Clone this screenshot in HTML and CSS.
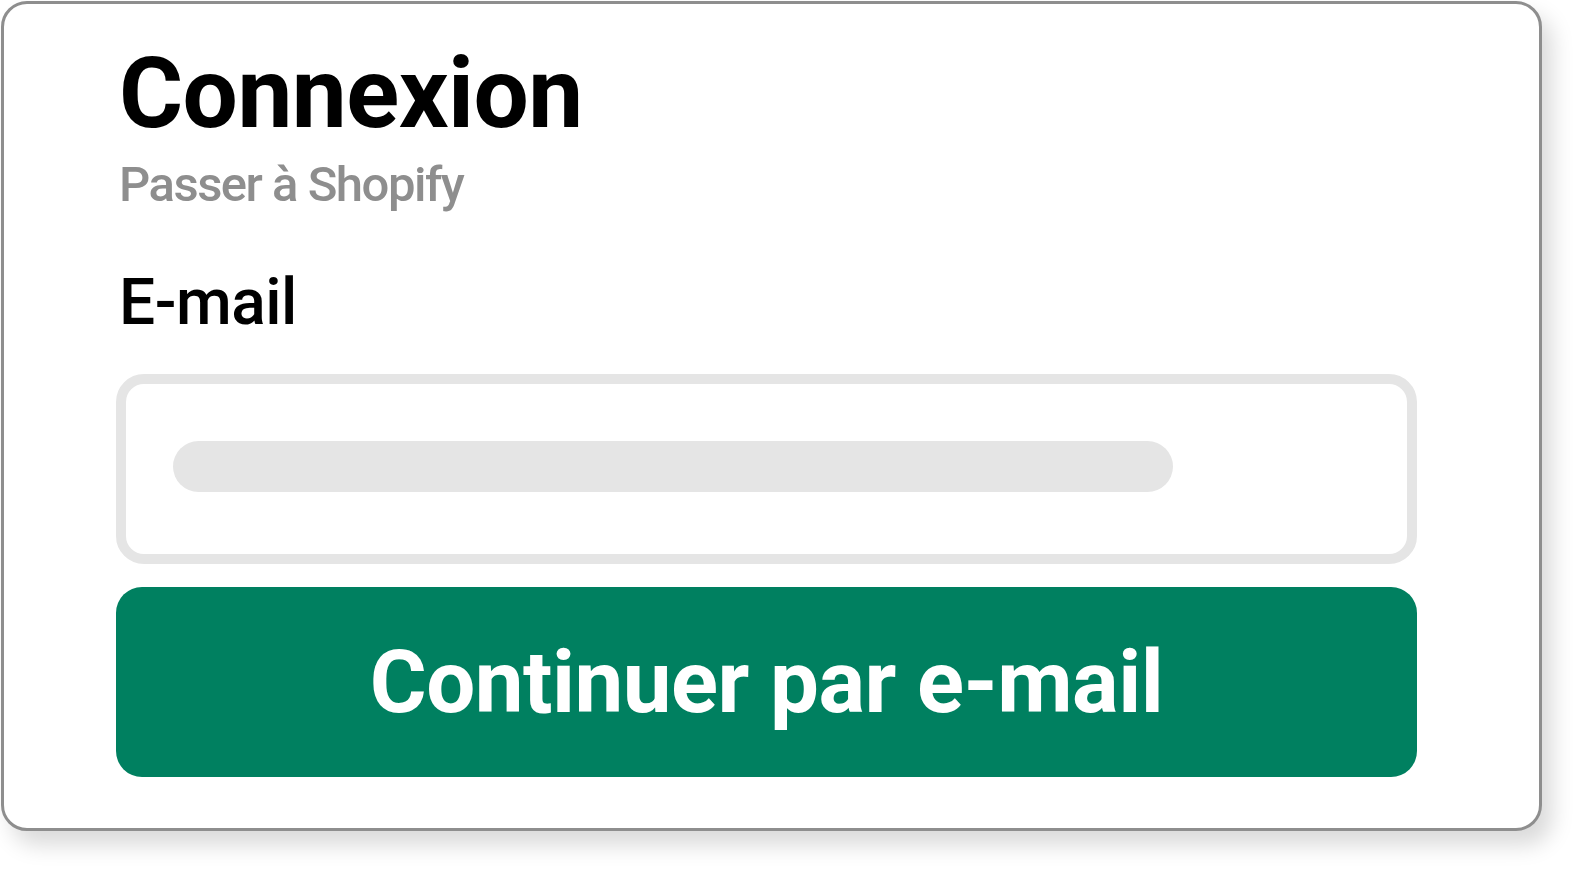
FILE: index.html
```html
<!DOCTYPE html>
<html lang="fr">
<head>
    <meta charset="UTF-8">
    <title>Connexion</title>
    <link rel="stylesheet" href="styles.css">
</head>
<body>
    <div class="card">
        <h1>Connexion</h1>
        <div class="subtitle">Passer à Shopify</div>
        <label class="field-label" for="email">E-mail</label>
        <div class="field" id="email">
            <div class="field-placeholder"></div>
        </div>
        <button class="submit">Continuer par e-mail</button>
    </div>
</body>
</html>
```

FILE: styles.css
```css
html, body {
    margin: 0;
    background: #fff;
}
body {
    min-height: 100vh;
    padding-bottom: 38px;
    box-sizing: border-box;
    font-family: 'Roboto', 'Liberation Sans', Arial, sans-serif;
    color: #000;
}
.card {
    box-sizing: border-box;
    width: 1541px;
    height: 830px;
    margin: 1px 0 0 1px;
    border: 3px solid #8e8e8e;
    border-radius: 26px;
    background: #fff;
    box-shadow: 10px 14px 22px rgba(0,0,0,0.15);
    padding: 30px 122px 0 112px;
    display: flex;
    flex-direction: column;
}
h1 {
    margin: 0 0 0 3px;
    font-size: 98px;
    font-weight: 700;
    line-height: 120px;
    letter-spacing: -0.5px;
}
.subtitle {
    margin: 1px 0 0 3px;
    font-size: 49px;
    line-height: 60px;
    color: #8e8e8e;
    font-weight: 500;
    letter-spacing: -1.5px;
}
.field-label {
    margin: 50px 0 0 3px;
    font-size: 64px;
    line-height: 76px;
    font-weight: 500;
    letter-spacing: -0.5px;
}
.field {
    margin-top: 33px;
    height: 190px;
    box-sizing: border-box;
    border: 10px solid #e5e5e5;
    border-radius: 28px;
    background: #fff;
    display: flex;
    align-items: center;
    padding: 0 47px;
}
.field-placeholder {
    width: 1000px;
    height: 51px;
    margin-top: -5px;
    border-radius: 26px;
    background: #e5e5e5;
}
.submit {
    margin-top: 23px;
    height: 190px;
    border: none;
    border-radius: 26px;
    background: #008060;
    color: #fff;
    font-family: inherit;
    font-size: 87px;
    font-weight: 700;
    letter-spacing: -0.5px;
    cursor: pointer;
}
```
